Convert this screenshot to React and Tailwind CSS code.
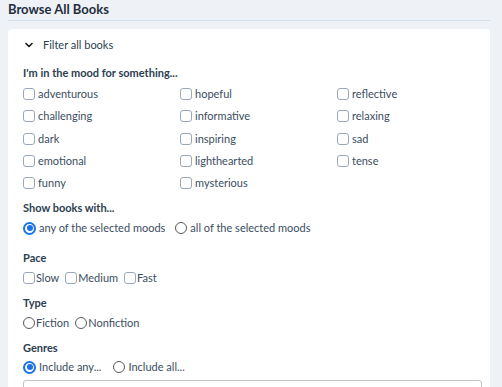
import { ChevronDown } from 'lucide-react'

const moods = [
  'adventurous', 'hopeful', 'reflective',
  'challenging', 'informative', 'relaxing',
  'dark', 'inspiring', 'sad',
  'emotional', 'lighthearted', 'tense',
  'funny', 'mysterious',
]

function Box({ round, checked }) {
  if (checked) {
    return (
      <span className="inline-flex size-[13px] shrink-0 items-center justify-center rounded-full border-2 border-[#1a73e8] bg-white">
        <span className="size-[6px] rounded-full bg-[#1a73e8]" />
      </span>
    )
  }
  return (
    <span
      className={[
        'inline-block size-[12px] shrink-0 border bg-white',
        round ? 'rounded-full border-[#5a5a5a]' : 'rounded-[3px] border-[#9aa8b9]',
      ].join(' ')}
    />
  )
}

function Option({ label, round, checked, gap = 'gap-[3px]' }) {
  return (
    <label className={`flex items-center ${gap} text-[11px] leading-[14px] text-[#3b4d61]`}>
      <Box round={round} checked={checked} />
      <span>{label}</span>
    </label>
  )
}

function Heading({ children }) {
  return <div className="text-[11px] leading-[14px] font-bold text-[#2c3e50]">{children}</div>
}

export default function App() {
  return (
    <main className="min-h-[387px] bg-[#eef2f7] px-2 font-['Lato',sans-serif] text-[#2c3e50]">
      <div className="w-[482px]">
        <h1 className="border-b border-[#d3dfec] pb-[2px] text-[13px] leading-[18px] font-bold text-[#1f2d3d]">
          Browse All Books
        </h1>
        <section className="mt-2 rounded-[4px] bg-white px-[15px] pt-2 pb-6">
          <div className="flex items-center gap-[8px] text-[11px] leading-[16px] text-[#2c3e50]">
            <ChevronDown size={12} strokeWidth={3.2} className="text-[#1a1a1a]" />
            <span>Filter all books</span>
          </div>

          <div className="mt-[13px]">
            <Heading>I'm in the mood for something...</Heading>
            <div className="mt-[7px] grid grid-cols-[157px_157px_1fr] gap-y-[8.25px]">
              {moods.map((m) => (
                <Option key={m} label={m} />
              ))}
            </div>
          </div>

          <div className="mt-[11px]">
            <Heading>Show books with...</Heading>
            <div className="mt-[6px] flex gap-[10px]">
              <Option label="any of the selected moods" round checked />
              <Option label="all of the selected moods" round />
            </div>
          </div>

          <div className="mt-[16px]">
            <Heading>Pace</Heading>
            <div className="mt-[6px] flex gap-[6px]">
              <Option label="Slow" gap="gap-[1px]" />
              <Option label="Medium" gap="gap-[1px]" />
              <Option label="Fast" gap="gap-[1px]" />
            </div>
          </div>

          <div className="mt-[11px]">
            <Heading>Type</Heading>
            <div className="mt-[6px] flex gap-[6px]">
              <Option label="Fiction" round gap="gap-[1px]" />
              <Option label="Nonfiction" round gap="gap-[1px]" />
            </div>
          </div>

          <div className="mt-[11px]">
            <Heading>Genres</Heading>
            <div className="mt-[5px] flex gap-[12px]">
              <Option label="Include any..." round checked />
              <Option label="Include all..." round />
            </div>
            <div className="mt-[6px] h-10 w-[459px] rounded-[3px] border border-[#c4c4c4]" />
          </div>
        </section>
      </div>
    </main>
  )
}
